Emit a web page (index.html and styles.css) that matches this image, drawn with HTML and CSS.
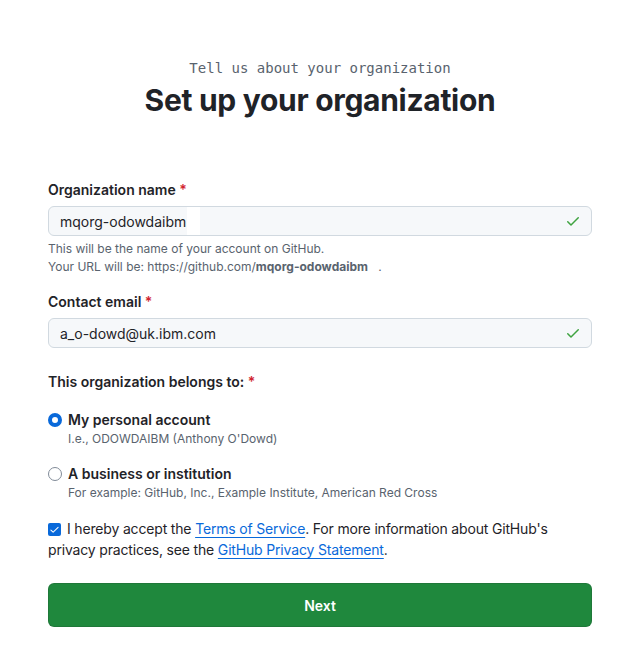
FILE: index.html
```html
<!DOCTYPE html>
<html>
<head>
<meta charset="utf-8">
<link rel="stylesheet" href="styles.css">
</head>
<body>
<main class="page">
  <header class="head">
    <p class="kicker">Tell us about your organization</p>
    <h1 class="title">Set up your organization</h1>
  </header>
  <form class="form">
    <div class="field">
      <label class="label">Organization name <span class="req">*</span></label>
      <div class="input">
        <span class="value">mqorg-odowdaibm</span><span class="redact"></span>
        <svg class="check" viewBox="0 0 16 16" width="16" height="16"><path d="M13.78 4.22a.75.75 0 0 1 0 1.06l-7.25 7.25a.75.75 0 0 1-1.06 0L2.220 9.28a.751.751 0 0 1 .018-1.042.751.751 0 0 1 1.042-.018L6 10.94l6.72-6.72a.75.75 0 0 1 1.06 0Z"/></svg>
      </div>
      <p class="note">This will be the name of your account on GitHub.<br>Your URL will be: https://github.com/<b>mqorg-odowdaibm</b> <span class="gap"></span>.</p>
    </div>
    <div class="field">
      <label class="label">Contact email <span class="req">*</span></label>
      <div class="input">
        <span class="value">a_o-dowd@uk.ibm.com</span>
        <svg class="check" viewBox="0 0 16 16" width="16" height="16"><path d="M13.78 4.22a.75.75 0 0 1 0 1.06l-7.25 7.25a.75.75 0 0 1-1.06 0L2.22 9.28a.751.751 0 0 1 .018-1.042.751.751 0 0 1 1.042-.018L6 10.94l6.72-6.72a.75.75 0 0 1 1.06 0Z"/></svg>
      </div>
    </div>
    <div class="field group">
      <p class="label">This organization belongs to: <span class="req">*</span></p>
      <div class="option">
        <span class="radio on"></span>
        <div>
          <div class="opt-title">My personal account</div>
          <div class="opt-note">I.e., ODOWDAIBM (Anthony O'Dowd)</div>
        </div>
      </div>
      <div class="option">
        <span class="radio"></span>
        <div>
          <div class="opt-title">A business or institution</div>
          <div class="opt-note">For example: GitHub, Inc., Example Institute, American Red Cross</div>
        </div>
      </div>
    </div>
    <p class="terms"><span class="cb"><svg viewBox="0 0 16 16" width="11" height="11"><path d="M13.78 4.22a.75.75 0 0 1 0 1.06l-7.25 7.25a.75.75 0 0 1-1.06 0L2.22 9.28a.751.751 0 0 1 .018-1.042.751.751 0 0 1 1.042-.018L6 10.94l6.72-6.72a.75.75 0 0 1 1.06 0Z"/></svg></span>I hereby accept the <a href="#">Terms of Service</a>. For more information about GitHub's privacy practices, see the <a href="#">GitHub Privacy Statement</a>.</p>
    <button class="btn" type="button">Next</button>
  </form>
</main>
</body>
</html>
```
FILE: styles.css
```css
* { box-sizing: border-box; }
body {
  margin: 0;
  background: #fff;
  color: #1f2328;
  font-family: Inter, "Liberation Sans", Arial, sans-serif;
  font-size: 14px;
}
.page {
  width: 544px;
  margin-left: 48px;
  padding-top: 59px;
}
.head { text-align: center; }
.kicker {
  margin: 0;
  font-family: "DejaVu Sans Mono", monospace;
  font-size: 14px;
  line-height: 18px;
  color: #59636e;
}
.title {
  margin: 4px 0 0;
  font-family: Inter, sans-serif;
  font-size: 30px;
  line-height: 38px;
  font-weight: 700;
  letter-spacing: -0.3px;
}
.form { margin-top: 62px; }
.field { margin-bottom: 17px; }
.label {
  display: block;
  margin: 0 0 7px;
  font-weight: 600;
  font-size: 14px;
  line-height: 18px;
}
.req { color: #d1242f; }
.input {
  display: flex;
  align-items: center;
  height: 30px;
  padding: 0 10px 0 11px;
  background: #f6f8fa;
  border: 1px solid #d1d9e0;
  border-radius: 6px;
  font-size: 14px;
}
.value { color: #1f2328; }
.redact {
  width: 13px;
  height: 28px;
  background: #fff;
  margin-left: 1px;
}
.check {
  margin-left: auto;
  fill: #3fa340;
}
.note {
  margin: 4px 0 0;
  font-size: 12px;
  line-height: 18px;
  color: #59636e;
}
.note b { font-weight: 700; }
.gap { display: inline-block; width: 7px; }
.group { margin-top: 25px; }
.group .label { margin-bottom: 20px; }
.option {
  display: flex;
  gap: 6px;
  margin-bottom: 18px;
}
.option:last-child { margin-bottom: 13px; }
.radio {
  flex: none;
  width: 14px;
  height: 14px;
  margin-top: 2px;
  border: 1px solid #818b98;
  border-radius: 50%;
  background: #fff;
}
.radio.on {
  border: 4px solid #0969da;
  background: #fff;
}
.opt-title {
  font-weight: 600;
  font-size: 14px;
  line-height: 18px;
}
.opt-note {
  margin-top: 2px;
  font-size: 12px;
  line-height: 16px;
  color: #59636e;
}
.terms {
  margin: 0;
  font-size: 14px;
  line-height: 21px;
  letter-spacing: -0.17px;
}
.cb {
  display: inline-flex;
  align-items: center;
  justify-content: center;
  width: 13px;
  height: 13px;
  margin-right: 6px;
  vertical-align: -1px;
  background: #0969da;
  border-radius: 2px;
}
.cb svg { fill: #fff; }
.terms a {
  color: #0969da;
  text-decoration: underline;
  text-underline-offset: 3px;
}
.btn {
  display: block;
  width: 100%;
  height: 44px;
  margin-top: 23px;
  background: #1f883d;
  border: 1px solid rgba(31,35,40,0.15);
  border-radius: 6px;
  color: #fff;
  font-family: inherit;
  font-weight: 600;
  font-size: 14px;
}
```
